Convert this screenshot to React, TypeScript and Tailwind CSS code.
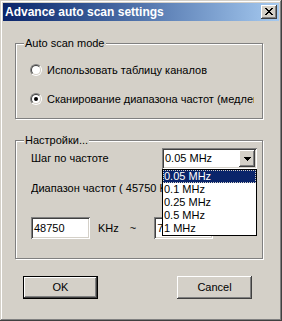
import React from 'react';

const raised = 'shadow-[inset_-1px_-1px_0_#404040,inset_1px_1px_0_#ffffff,inset_-2px_-2px_0_#808080,inset_2px_2px_0_#d4d0c8]';
const sunken = 'shadow-[inset_1px_1px_0_#808080,inset_-1px_-1px_0_#ffffff,inset_2px_2px_0_#404040,inset_-2px_-2px_0_#d4d0c8]';

const CloseGlyph: React.FC = () => (
  <svg width="8" height="7" viewBox="0 0 8 7" shapeRendering="crispEdges">
    <path
      fill="#000"
      d="M0 0h2v1H0zM6 0h2v1H6zM1 1h2v1H1zM5 1h2v1H5zM2 2h4v1H2zM3 3h2v1H3zM2 4h4v1H2zM1 5h2v1H1zM5 5h2v1H5zM0 6h2v1H0zM6 6h2v1H6z"
    />
  </svg>
);

const ArrowGlyph: React.FC = () => (
  <svg width="7" height="4" viewBox="0 0 7 4" shapeRendering="crispEdges">
    <path fill="#000" d="M0 0h7v1H0zM1 1h5v1H1zM2 2h3v1H2zM3 3h1v1H3z" />
  </svg>
);

const Radio: React.FC<{ checked?: boolean }> = ({ checked }) => (
  <div className="w-[12px] h-[12px] rounded-full border border-t-[#808080] border-l-[#808080] border-r-white border-b-white shrink-0">
    <div className="w-full h-full rounded-full border border-t-[#404040] border-l-[#404040] border-r-[#d4d0c8] border-b-[#d4d0c8] bg-white flex items-center justify-center">
      {checked && <div className="w-[4px] h-[4px] rounded-full bg-black" />}
    </div>
  </div>
);

const Group: React.FC<{ title: string; className: string; children: React.ReactNode }> = ({ title, className, children }) => (
  <div className={`relative border border-[#808080] shadow-[inset_1px_1px_0_#ffffff,1px_1px_0_#ffffff] ${className}`}>
    <span className="absolute -top-[7px] left-[8px] px-[1px] bg-[#d4d0c8] leading-[13px]">{title}</span>
    {children}
  </div>
);

const steps = ['0.05 MHz', '0.1 MHz', '0.25 MHz', '0.5 MHz', '1 MHz'];

const App: React.FC = () => {
  return (
    <div className="w-[282px] h-[321px] bg-[#d4d0c8] p-[3px] flex flex-col text-[11px] text-black font-['Liberation_Sans',Tahoma,sans-serif] shadow-[inset_-1px_-1px_0_#404040,inset_1px_1px_0_#d4d0c8,inset_-2px_-2px_0_#808080,inset_2px_2px_0_#ffffff]">
      {/* title bar */}
      <div className="h-[18px] flex items-center justify-between pl-[2px] pr-[2px] bg-gradient-to-r from-[#0a246a] to-[#a6caf0]">
        <span className="text-white font-bold text-[12px] leading-none">Advance auto scan settings</span>
        <div className={`w-[16px] h-[14px] bg-[#d4d0c8] flex items-center justify-center pb-[1px] ${raised}`}>
          <CloseGlyph />
        </div>
      </div>

      <Group title="Auto scan mode" className="mt-[22px] ml-[12px] w-[248px] h-[76px]">
        <div className="flex flex-col gap-[15px] pt-[19px] pl-[14px]">
          <div className="h-[14px] flex items-center gap-[5px]">
            <Radio />
            <span className="whitespace-nowrap">Использовать таблицу каналов</span>
          </div>
          <div className="h-[14px] flex items-center gap-[5px]">
            <Radio checked />
            <span className="w-[207px] overflow-hidden whitespace-nowrap">Сканирование диапазона частот (медленно)</span>
          </div>
        </div>
      </Group>

      <Group title="Настройки..." className="mt-[21px] ml-[12px] w-[248px] h-[119px]">
        <div className="flex flex-col pl-[15px] pt-[7px]">
          <div className="flex items-center">
            <span className="w-[131px]">Шаг по частоте</span>
            <div className={`relative w-[95px] h-[21px] bg-white flex items-center justify-between p-[2px] ${sunken}`}>
              <span className="pl-[1px]">0.05 MHz</span>
              <div className={`w-[16px] h-[17px] bg-[#d4d0c8] flex items-center justify-center ${raised}`}>
                <ArrowGlyph />
              </div>
              <div className="absolute top-full left-0 w-[95px] z-10 bg-white border border-black flex flex-col">
                {steps.map((s, i) => (
                  <div
                    key={s}
                    className={`h-[13px] leading-[13px] pl-[1px] ${i === 0 ? 'bg-[#0a246a] text-white outline outline-1 outline-dotted outline-[#d4d0c8] -outline-offset-1' : ''}`}
                  >
                    {s}
                  </div>
                ))}
              </div>
            </div>
          </div>

          <div className="mt-[13px] h-[13px] leading-[13px] w-[225px] overflow-hidden whitespace-nowrap">
            Диапазон частот ( 45750 KHz ~ 863250 KHz )
          </div>

          <div className="mt-[22px] flex items-center">
            <div className={`w-[59px] h-[22px] bg-white flex items-center pl-[3px] ${sunken}`}>48750</div>
            <span className="ml-[8px]">KHz</span>
            <span className="ml-[11px]">~</span>
            <div className={`ml-[18px] w-[59px] h-[22px] bg-white flex items-center pl-[3px] ${sunken}`}>79250</div>
          </div>
        </div>
      </Group>

      <div className="mt-[17px] flex">
        <div className="ml-[20px] w-[75px] h-[23px] border border-black">
          <div className={`w-full h-full flex items-center justify-center ${raised}`}>OK</div>
        </div>
        <div className={`ml-[79px] w-[75px] h-[23px] flex items-center justify-center ${raised}`}>Cancel</div>
      </div>
    </div>
  );
};

export default App;
